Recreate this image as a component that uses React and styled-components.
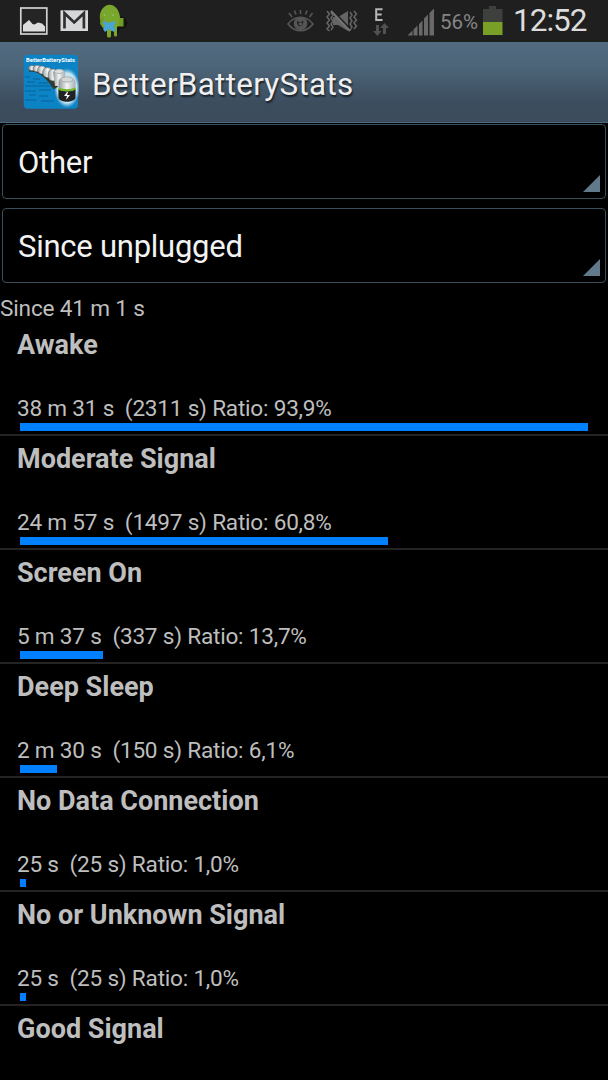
import React from "react";
import styled, { createGlobalStyle } from "styled-components";

const GlobalStyle = createGlobalStyle`
  * { box-sizing: border-box; }
  html, body { margin: 0; background: #000; }
  body { font-family: Roboto, sans-serif; color: #bebebe; overflow: hidden; }
  svg { display: block; flex: none; }
`;

const Screen = styled.div`
  width: 608px;
  height: 1080px;
  overflow: hidden;
  background: #000;
  display: flex;
  flex-direction: column;
`;

const StatusBar = styled.header`
  flex: none;
  height: 42px;
  background: #1f1f1f;
  display: flex;
  justify-content: space-between;
`;

const Clock = styled.span`
  width: 95px;
  margin-left: 10px;
  font-size: 31.5px;
  line-height: 42px;
  letter-spacing: -1px;
  color: #dcdcdc;
  white-space: nowrap;
`;

const Percent = styled.span`
  width: 39px;
  margin: 1px 4px 0 6px;
  font-size: 20.5px;
  line-height: 42px;
  color: #858585;
  white-space: nowrap;
`;

const StatusGroup = styled.div`
  display: flex;
`;

const ActionBar = styled.div`
  flex: none;
  height: 81px;
  padding-left: 23px;
  display: flex;
  align-items: center;
  gap: 13px;
  background: linear-gradient(#526b80 0%, #4d6579 30%, #3c4d5e 75%, #3b4b5b 100%);
  border-bottom: 1px solid #4c6b80;
`;

const AppTitle = styled.h1`
  margin: 6px 0 0;
  font-size: 31.4px;
  font-weight: 400;
  line-height: 40px;
  letter-spacing: 0.3px;
  color: #f0f0f0;
  text-shadow: 1px 2px 2px rgba(0, 0, 0, 0.65);
`;

const Selectors = styled.div`
  flex: none;
  padding: 1px 2px 0;
  display: flex;
  flex-direction: column;
  gap: 9px;
`;

const Spinner = styled.button`
  height: 75px;
  padding: 0 5px 6px 15px;
  display: flex;
  align-items: flex-end;
  justify-content: space-between;
  border: 1px solid #3b4f5c;
  border-radius: 4px;
  background: #000;
  font-family: inherit;
  font-size: 31px;
  line-height: 40px;
  letter-spacing: -0.25px;
  color: #f3f3f3;
  text-align: left;
`;

const SpinnerLabel = styled.span`
  margin-bottom: 9px;
`;

const Since = styled.p`
  flex: none;
  margin: 12px 0 0;
  height: 27px;
  font-size: 22.6px;
  line-height: 28px;
  letter-spacing: -0.17px;
`;

const StatList = styled.ul`
  margin: 0;
  padding: 0;
  list-style: none;
`;

const StatRow = styled.li`
  height: 114px;
  padding: 5px 17px 0;
  border-bottom: 2px solid #242424;
`;

const StatName = styled.h2`
  margin: 0;
  font-size: 27px;
  font-weight: 700;
  line-height: 36px;
  white-space: nowrap;
`;

const StatDetail = styled.p`
  margin: 35px 0 0;
  height: 25px;
  font-size: 22.6px;
  line-height: 22px;
  letter-spacing: -0.22px;
  white-space: pre;
`;

const Bar = styled.div`
  height: 8px;
  margin-left: 3px;
  background: #0080ff;
`;

const stats = [
  { name: "Awake", detail: "38 m 31 s  (2311 s) Ratio: 93,9%", ratio: 93.9 },
  { name: "Moderate Signal", detail: "24 m 57 s  (1497 s) Ratio: 60,8%", ratio: 60.8 },
  { name: "Screen On", detail: "5 m 37 s  (337 s) Ratio: 13,7%", ratio: 13.7 },
  { name: "Deep Sleep", detail: "2 m 30 s  (150 s) Ratio: 6,1%", ratio: 6.1 },
  { name: "No Data Connection", detail: "25 s  (25 s) Ratio: 1,0%", ratio: 1.0 },
  { name: "No or Unknown Signal", detail: "25 s  (25 s) Ratio: 1,0%", ratio: 1.0 },
  { name: "Good Signal" },
];

const PIXELS_PER_PERCENT = 6.05;

const Notifications = () => (
  <svg width="140" height="42" viewBox="0 0 140 42">
    <rect x="20.800" y="8" width="26" height="26" fill="#252525" stroke="#d2d2d2" strokeWidth="1.700" />
    <path d="M23 31.500V25l6-5 3.500 4 2 .5 3.500-2 4 1 3 3v5z" fill="#dcdcdc" />
    <rect x="60.500" y="10.300" width="27.500" height="20.700" fill="#d5d7d8" />
    <path d="M64.500 28.500V13.200l9.700 9.300 9.700-9.300v15.300" fill="none" stroke="#303030" strokeWidth="2.700" />
    <path d="M121 16l4 2 3 5-3 5-5 1-2 4-3 3z" fill="#11150d" />
    <path d="M100 19c-1-7 3-13 8-14 6-1 11 4 12 12l-1 9-2 1v8c0 2-3 2-3 0v-4h-3v5c0 2-4 2-4 0v-6l-5-3z" fill="#79a62c" />
    <path d="M119 18h4.500v8.500H119zM101 16l-1 8 2 2 2-8z" fill="#729b28" />
    <circle cx="104.500" cy="15" r="0.800" fill="#b0c680" />
    <circle cx="113" cy="15" r="0.800" fill="#b0c680" />
    <path d="M104 21l5 2 5-2 1.500 2-2 3 2 3-1.500 3-5-3-4 3-2-3 2-3-2.500-3z" fill="#49a5d5" />
  </svg>
);

const SystemIcons = () => (
  <svg width="150" height="42" viewBox="284 0 150 42">
    <g fill="none" stroke="#555" strokeWidth="1.700">
      <path d="M288 24c7-9 18-9 25 0-7 9-18 9-25 0z" />
      <path d="M289 13l3 4M294.500 10.500l1.500 4M300.500 10v4M307 10.500l-1.500 4M312.500 13l-3 4" />
      <circle cx="300.500" cy="23.500" r="6" fill="#555" />
    </g>
    <path d="M297 20.500l3 2 3-2 .5 2-1.500 3-3 1-2-3z" fill="#292929" />
    <circle cx="300.500" cy="24" r="1.300" fill="#666" />
    <g fill="none" stroke="#656565" strokeWidth="1.500">
      <path d="M327 11l2.500 3-2.500 3 2.500 3-2.500 3 2.500 3-2.500 3 2.500 2M331 12l2 3-2 3 2 3-2 3 2 3-2 3M350 12l2 3-2 3 2 3-2 3 2 3-2 3M354 11l2.500 3-2.500 3 2.500 3-2.500 3 2.500 3-2.500 3" />
    </g>
    <path d="M333 17h5l10-6v20l-10-6h-5z" fill="#656565" />
    <path d="M332 10l18 19" stroke="#1f1f1f" strokeWidth="2" />
    <path d="M331 11l19 20" stroke="#737373" strokeWidth="2" />
    <path d="M382.500 9.300h-6.300V20h6.300M376.200 14.500h5.500" fill="none" stroke="#b7b7b7" strokeWidth="2" />
    <path d="M376 25h3v6h2.500l-4 5-4.500-5h3zM383 34v-6h-3l4.500-5 4.500 5h-3v6z" fill="#515151" />
    <path d="M407.500 35.500l5-5v5zM413.500 35.500v-6l4-4v10zM419 35.500V24l3.500-3.500v15zM424 35.500V18.500l4-4v21zM429.500 35.500V13l5-5v27.500z" fill="#696969" />
  </svg>
);

const BatteryIcon = () => (
  <svg width="20" height="42" viewBox="0 0 20 42">
    <path d="M0 9h6V6h7v3h6.500v13H0z" fill="#3e403e" />
    <path d="M0 22h19.500v13H0z" fill="#78a027" />
  </svg>
);

const AppIcon = () => (
  <svg width="56" height="56" viewBox="0 0 56 56">
    <defs>
      <linearGradient id="cell" x1="0" x2="1">
        <stop offset="0" stopColor="#929799" />
        <stop offset="0.5" stopColor="#f3f4f4" />
        <stop offset="1" stopColor="#a9afb1" />
      </linearGradient>
      <radialGradient id="glow">
        <stop offset="0.75" stopColor="#c4e4f3" />
        <stop offset="1" stopColor="#83c3e3" stopOpacity="0" />
      </radialGradient>
    </defs>
    <rect x="0.700" y="0.700" width="54.300" height="54" rx="4" fill="#0b83c5" />
    <path d="M2 23h5m3 2h7m4-1h9M4 28h8m3 1h10M2 32h27M2 37h11m3-1h12M6 41h7m3 1h9M2 46h12m4 1h13" stroke="#086196" strokeWidth="1.300" opacity="0.6" />
    <ellipse cx="44" cy="34" rx="13" ry="20" fill="url(#glow)" />
    <text x="3" y="7.500" fontSize="6.200" fontWeight="700" fill="#fff" textLength="49" lengthAdjust="spacingAndGlyphs">BetterBatteryStats</text>
    <path d="M6 15q9 0 15 5t12 14" fill="none" stroke="#303b30" strokeWidth="5" />
    <g fill="url(#cell)" stroke="#56605f" strokeWidth="0.500">
      <ellipse cx="9" cy="14" rx="3.500" ry="2.600" />
      <ellipse cx="14" cy="14.500" rx="4" ry="3.200" />
      <ellipse cx="19" cy="16" rx="4.500" ry="4" />
      <ellipse cx="24.500" cy="18.500" rx="5" ry="5" />
      <ellipse cx="30" cy="21" rx="5" ry="6" />
    </g>
    <path d="M30 18c3-4 10-4 12 0v14H32z" fill="url(#cell)" />
    <ellipse cx="36" cy="17.500" rx="4.500" ry="2" fill="#dce0e1" stroke="#8b9395" strokeWidth="0.500" />
    <path d="M35.500 28c0-7 17-7 17 0v15c0 6-17 6-17 0z" fill="url(#cell)" />
    <ellipse cx="44" cy="25.500" rx="6" ry="2.600" fill="#d5d8d9" stroke="#91999b" strokeWidth="0.700" />
    <path d="M35.500 35c4 3 13 3 17 0v9c-2 5-15 5-17 0z" fill="#202323" />
    <path d="M35.500 34.500c4 2.500 13 2.500 17 0" fill="none" stroke="#72b729" strokeWidth="2.200" />
    <path d="M44 38l-3 4h3l-1 4 4-5h-3l1-3z" fill="#fff" />
  </svg>
);

const CornerMark = () => (
  <svg width="17" height="17" viewBox="0 0 17 17">
    <path d="M17 0v17H0z" fill="#607a8b" />
  </svg>
);

export default function App() {
  return (
    <Screen>
      <GlobalStyle />
      <StatusBar>
        <Notifications />
        <StatusGroup>
          <SystemIcons />
          <Percent>56%</Percent>
          <BatteryIcon />
          <Clock>12:52</Clock>
        </StatusGroup>
      </StatusBar>
      <ActionBar>
        <AppIcon />
        <AppTitle>BetterBatteryStats</AppTitle>
      </ActionBar>
      <Selectors>
        <Spinner>
          <SpinnerLabel>Other</SpinnerLabel>
          <CornerMark />
        </Spinner>
        <Spinner>
          <SpinnerLabel>Since unplugged</SpinnerLabel>
          <CornerMark />
        </Spinner>
      </Selectors>
      <Since>Since 41 m 1 s</Since>
      <StatList>
        {stats.map((s) => (
          <StatRow key={s.name}>
            <StatName>{s.name}</StatName>
            {s.detail && <StatDetail>{s.detail}</StatDetail>}
            {s.ratio && <Bar style={{ width: s.ratio * PIXELS_PER_PERCENT }} />}
          </StatRow>
        ))}
      </StatList>
    </Screen>
  );
}
